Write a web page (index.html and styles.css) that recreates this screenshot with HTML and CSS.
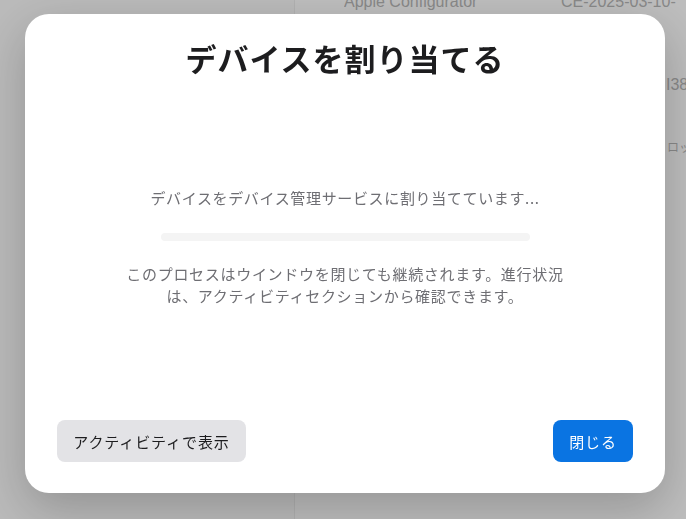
FILE: index.html
```html
<!DOCTYPE html>
<html lang="ja">
<head>
<meta charset="utf-8">
<title>デバイスを割り当てる</title>
<link rel="stylesheet" href="styles.css">
</head>
<body>
<div class="app">
  <aside class="sidebar"></aside>
  <main class="content">
    <div class="row row-first">
      <span class="cell cell-name">Apple Configurator</span>
      <span class="cell cell-id">CE-2025-03-10-</span>
    </div>
    <div class="row row-second">
      <span class="cell cell-name"></span>
      <span class="cell cell-id"><span class="serial">I38</span></span>
    </div>
    <div class="row row-third">
      <span class="cell cell-name"></span>
      <span class="cell cell-id"><span class="small">ロッ</span></span>
    </div>
  </main>
</div>

<div class="overlay">
  <section class="modal">
    <h1 class="modal-title">デバイスを割り当てる</h1>
    <div class="modal-body">
      <p class="status">デバイスをデバイス管理サービスに割り当てています...</p>
      <div class="progress"><div class="progress-fill" style="width: 0%"></div></div>
      <p class="note">このプロセスはウインドウを閉じても継続されます。進行状況<br>は、アクティビティセクションから確認できます。</p>
    </div>
    <div class="modal-actions">
      <button class="btn btn-secondary">アクティビティで表示</button>
      <button class="btn btn-primary">閉じる</button>
    </div>
  </section>
</div>
</body>
</html>
```

FILE: styles.css
```css
* { box-sizing: border-box; }

html, body {
  margin: 0;
  padding: 0;
  width: 686px;
  height: 519px;
  overflow: hidden;
  font-family: "Noto Sans CJK JP", "Noto Sans", "Liberation Sans", sans-serif;
}

.app {
  display: grid;
  grid-template-columns: 295px 1fr;
  height: 519px;
  background: #fdfdfd;
}

.sidebar {
  border-right: 1px solid #ececec;
  background: #f9f9f9;
}

.content {
  display: flex;
  flex-direction: column;
  font-family: "Liberation Sans", "Noto Sans CJK JP", sans-serif;
  color: #b6b6b6;
}

.row {
  display: grid;
  grid-template-columns: 217px 1fr;
  padding-left: 49px;
  font-size: 16px;
  white-space: nowrap;
}

.row-first { margin-top: -7px; height: 83px; }
.row-second { height: 62px; }
.row-third { font-size: 12px; }

.cell { overflow: hidden; }
.cell-id { overflow: visible; }
.serial { margin-left: 105px; font-size: 16px; }
.small { margin-left: 106px; font-family: "Noto Sans CJK JP", sans-serif; }

.overlay {
  position: fixed;
  inset: 0;
  background: rgba(0, 0, 0, 0.25);
  padding: 14px 0 0 25px;
}

.modal {
  width: 640px;
  height: 479px;
  background: #ffffff;
  border-radius: 24px;
  box-shadow: 0 16px 48px rgba(0, 0, 0, 0.22);
  display: flex;
  flex-direction: column;
  padding: 24px 32px 31px;
}

.modal-title {
  margin: 0;
  text-align: center;
  font-size: 31px;
  font-weight: 700;
  line-height: 40px;
  color: #1d1d1f;
  letter-spacing: 1px;
}

.modal-body {
  flex: 1;
  display: flex;
  flex-direction: column;
  align-items: center;
  padding-top: 109px;
}

.status {
  margin: 0;
  font-size: 15px;
  line-height: 22px;
  color: #6e6e73;
  letter-spacing: 0.65px;
}

.progress {
  width: 369px;
  height: 8px;
  margin-top: 24px;
  border-radius: 4px;
  background: #f4f4f4;
  overflow: hidden;
}

.progress-fill {
  height: 100%;
  background: #0a72e0;
}

.note {
  margin: 22px 0 0;
  font-size: 15px;
  line-height: 22px;
  text-align: center;
  color: #6e6e73;
  letter-spacing: 0.7px;
}

.modal-actions {
  display: flex;
  justify-content: space-between;
  align-items: center;
}

.btn {
  height: 42px;
  border: none;
  border-radius: 8px;
  font-family: "Noto Sans CJK JP", "Noto Sans", sans-serif;
  font-size: 15px;
  padding: 0;
  cursor: pointer;
  letter-spacing: 0.9px;
}

.btn-secondary {
  width: 189px;
  background: #e3e3e6;
  color: #1d1d1f;
}

.btn-primary {
  width: 80px;
  background: #0a74e2;
  color: #ffffff;
}
```
